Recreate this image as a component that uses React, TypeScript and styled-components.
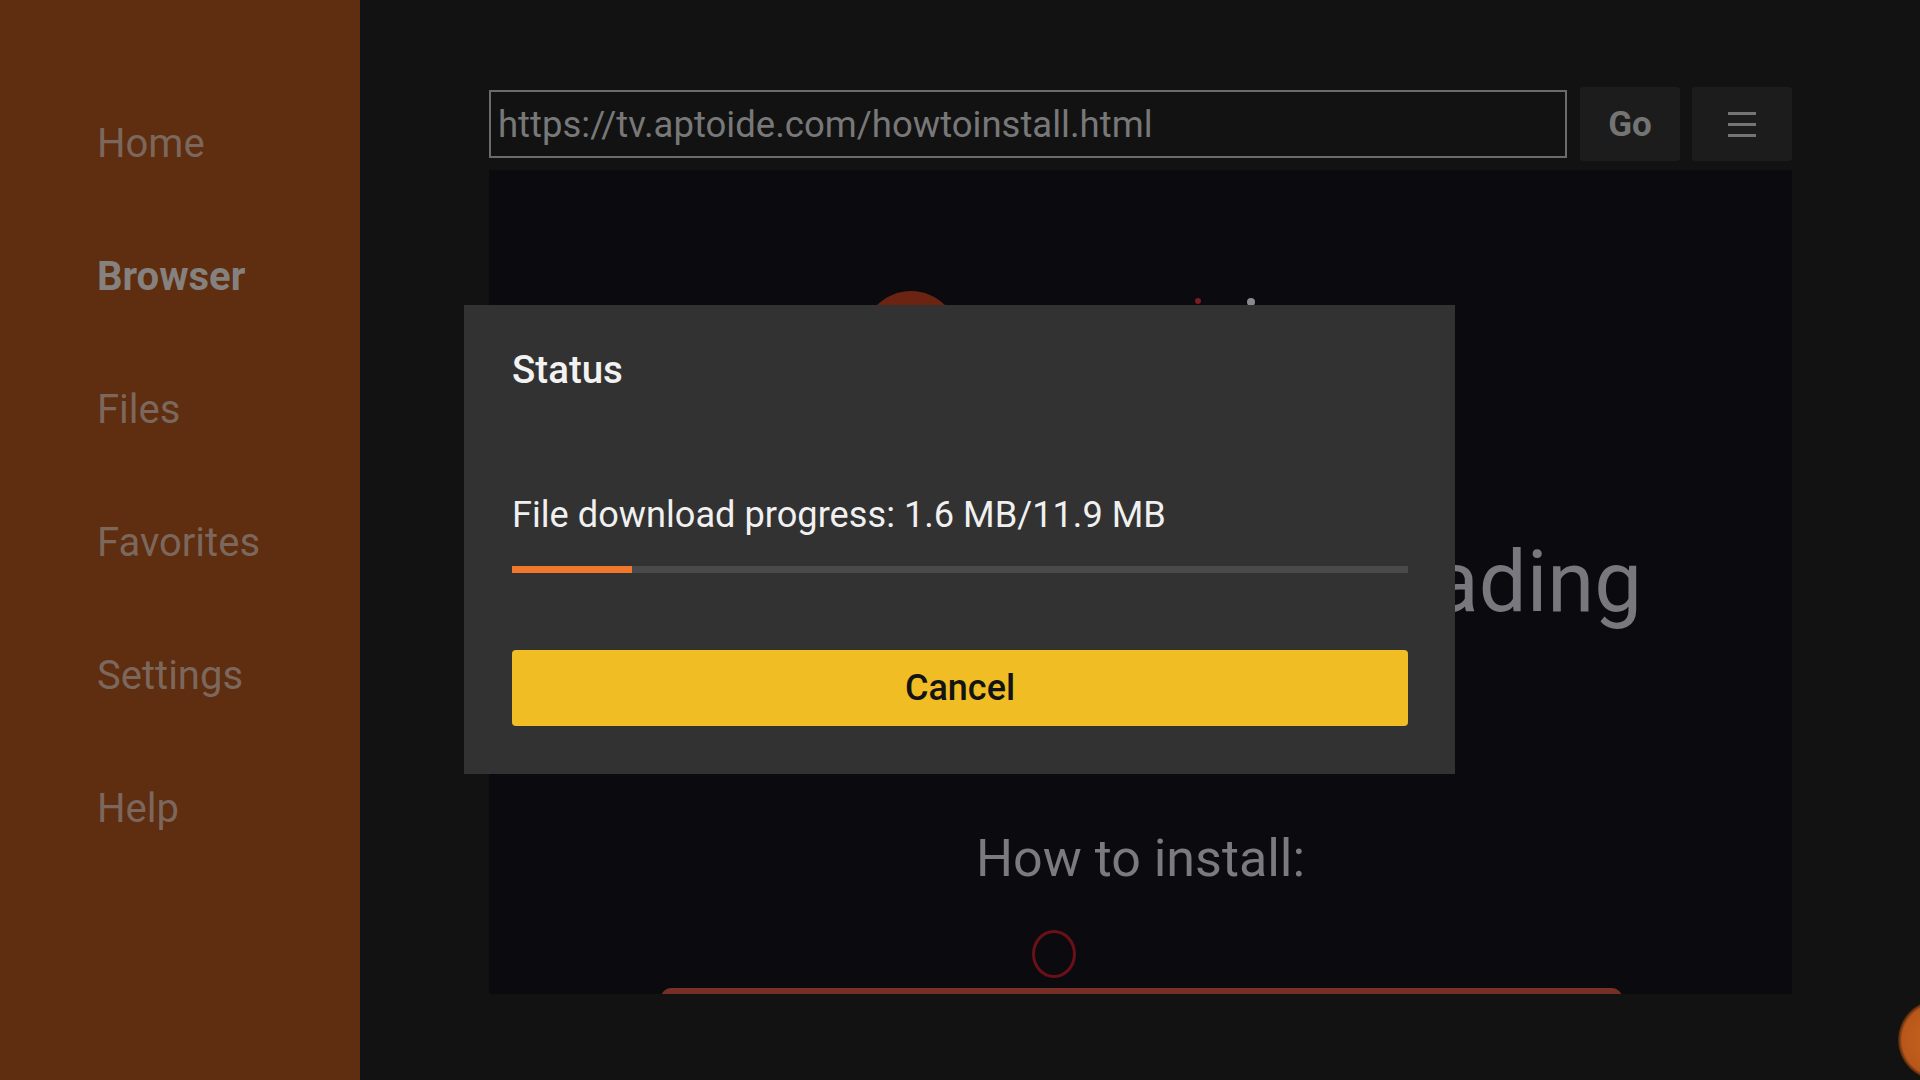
import React from 'react';
import styled, { createGlobalStyle } from 'styled-components';

const GlobalStyle = createGlobalStyle`
  html, body {
    margin: 0;
    padding: 0;
    background: #121212;
    font-family: Roboto, 'Noto Sans', 'Liberation Sans', sans-serif;
  }
  * {
    box-sizing: border-box;
  }
`;

const Screen = styled.div`
  width: 1920px;
  height: 1080px;
  display: flex;
  position: relative;
  overflow: hidden;
  background: #121212;
`;

const Sidebar = styled.nav`
  width: 360px;
  flex-shrink: 0;
  background: #5f2d0f;
  padding-top: 77px;
  display: flex;
  flex-direction: column;
`;

const NavItem = styled.div<{ $active?: boolean }>`
  height: 133px;
  line-height: 133px;
  padding-left: 97px;
  font-size: 40px;
  font-weight: ${(p) => (p.$active ? 700 : 400)};
  color: ${(p) => (p.$active ? '#85817f' : '#7b675c')};
`;

const Main = styled.main`
  flex: 1;
  display: flex;
  flex-direction: column;
  padding: 87px 128px 86px 129px;
`;

const Toolbar = styled.div`
  display: flex;
  align-items: center;
  gap: 12px;
  height: 74px;
`;

const UrlBox = styled.div`
  flex: 1;
  height: 68px;
  border: 2px solid #6b6b6b;
  display: flex;
  align-items: center;
  padding-left: 7px;
  font-size: 36.5px;
  color: #787878;
  margin-right: 1px;
`;

const ToolButton = styled.div`
  width: 100px;
  height: 74px;
  background: #1c1c1c;
  border-radius: 3px;
  display: flex;
  align-items: center;
  justify-content: center;
  font-size: 35px;
  font-weight: 700;
  color: #747474;
`;

const WebView = styled.div`
  margin-top: 9px;
  flex: 1;
  background: #0b0a0f;
  display: flex;
  flex-direction: column;
  overflow: hidden;
  > * {
    flex-shrink: 0;
  }
`;

const LogoRow = styled.div`
  margin-top: 115px;
  height: 100px;
  display: flex;
  align-items: flex-start;
  padding-left: 374px;
`;

const LogoMark = styled.div`
  width: 96px;
  height: 96px;
  margin-top: 6px;
  border-radius: 50%;
  background: #6b2412;
`;

const Dot = styled.span<{ $color: string; $offset: number; $size: number }>`
  width: ${(p) => p.$size}px;
  height: ${(p) => p.$size}px;
  border-radius: 50%;
  background: ${(p) => p.$color};
  margin-left: ${(p) => p.$offset}px;
  margin-top: 13px;
`;

const Heading = styled.div`
  margin-top: 147px;
  height: 100px;
  line-height: 100px;
  font-size: 85px;
  color: #79787e;
  text-align: right;
  padding-right: 150px;
  white-space: nowrap;
`;

const SubHeading = styled.div`
  margin-top: 196px;
  height: 62px;
  line-height: 62px;
  font-size: 52px;
  color: #7b7a80;
  text-align: center;
`;

const StepRing = styled.div`
  margin: 40px 0 0 543px;
  width: 44px;
  height: 48px;
  border-radius: 50%;
  border: 3px solid #6a1118;
`;

const RedBar = styled.div`
  margin: 10px 170px 0 172px;
  height: 40px;
  border-radius: 10px 10px 0 0;
  background: linear-gradient(#7a3126, #5a1f18);
`;

const Overlay = styled.div`
  position: absolute;
  left: 464px;
  top: 305px;
  width: 991px;
  background: #323232;
  padding: 43px 47px 48px 48px;
  display: flex;
  flex-direction: column;
`;

const DialogTitle = styled.div`
  font-size: 38.5px;
  font-weight: 500;
  line-height: 44px;
  color: #f2f2f2;
`;

const DialogMessage = styled.div`
  margin-top: 101px;
  font-size: 36.2px;
  line-height: 44px;
  color: #f0f0f0;
`;

const Track = styled.div`
  margin-top: 29px;
  height: 7px;
  background: #4a4a4a;
  display: flex;
`;

const Fill = styled.div`
  height: 100%;
  background: #ef782c;
`;

const CancelButton = styled.div`
  margin-top: 77px;
  height: 76px;
  border-radius: 4px;
  background: #f0be24;
  display: flex;
  align-items: center;
  justify-content: center;
  font-size: 36px;
  font-weight: 500;
  color: #141414;
`;

const Cursor = styled.div`
  position: absolute;
  left: 1898px;
  top: 1000px;
  width: 80px;
  height: 80px;
  border-radius: 50%;
  background: radial-gradient(circle at 50% 50%, #a8402a 0 9px, #c2601c 15px, #b8571a 36px, #4a230c 40px);
`;

const navItems = ['Home', 'Browser', 'Files', 'Favorites', 'Settings', 'Help'];

const App = () => {
  const loaded = 1.6;
  const total = 11.9;
  const pct = (loaded / total) * 100;

  return (
    <>
      <GlobalStyle />
      <Screen>
        <Sidebar>
          {navItems.map((item) => (
            <NavItem key={item} $active={item === 'Browser'}>
              {item}
            </NavItem>
          ))}
        </Sidebar>
        <Main>
          <Toolbar>
            <UrlBox>https://tv.aptoide.com/howtoinstall.html</UrlBox>
            <ToolButton>Go</ToolButton>
            <ToolButton>
              <svg width="30" height="28" viewBox="0 0 30 28">
                <rect x="1" y="2" width="28" height="3" fill="#747474" />
                <rect x="1" y="13" width="28" height="3" fill="#747474" />
                <rect x="1" y="24" width="28" height="3" fill="#747474" />
              </svg>
            </ToolButton>
          </Toolbar>
          <WebView>
            <LogoRow>
              <LogoMark />
              <Dot $color="#7a1a22" $offset={236} $size={6} />
              <Dot $color="#8a8a8e" $offset={46} $size={8} />
            </LogoRow>
            <Heading>Downloading</Heading>
            <SubHeading>How to install:</SubHeading>
            <StepRing />
            <RedBar />
          </WebView>
        </Main>
        <Overlay>
          <DialogTitle>Status</DialogTitle>
          <DialogMessage>
            File download progress: {loaded} MB/{total} MB
          </DialogMessage>
          <Track>
            <Fill style={{ width: `${pct}%` }} />
          </Track>
          <CancelButton>Cancel</CancelButton>
        </Overlay>
        <Cursor />
      </Screen>
    </>
  );
};

export default App;
